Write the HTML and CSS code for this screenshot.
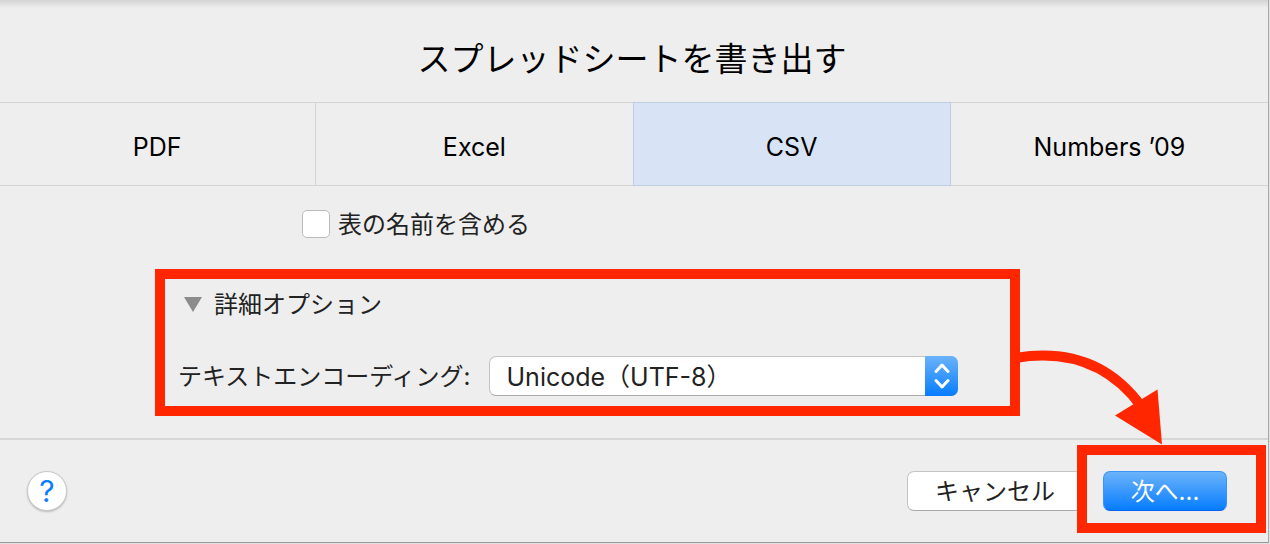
FILE: index.html
```
<!DOCTYPE html>
<html lang="ja">
<head>
    <meta charset="UTF-8">
    <title>スプレッドシートを書き出す</title>
    <link rel="stylesheet" href="styles.css">
</head>
<body>
    <form class="sheet">
        <h1>スプレッドシートを書き出す</h1>

        <div class="tabs" role="tablist">
            <button type="button" role="tab">PDF</button>
            <button type="button" role="tab">Excel</button>
            <button type="button" role="tab" class="active" aria-selected="true">CSV</button>
            <button type="button" role="tab">Numbers ’09</button>
        </div>

        <div class="options">
            <div class="check-row">
                <input type="checkbox" id="tableNames">
                <label for="tableNames">表の名前を含める</label>
            </div>

            <div class="advanced">
                <button type="button" class="disclosure" aria-expanded="true">
                    <svg width="18" height="15" viewBox="0 0 18 15"><path d="M0 0h18L9 15z" fill="#8c8c8c"/></svg>
                    <span>詳細オプション</span>
                </button>
                <div class="encoding-row">
                    <label for="encoding">テキストエンコーディング:</label>
                    <div class="popup">
                        <select id="encoding">
                            <option>Unicode（UTF-8）</option>
                        </select>
                        <span class="stepper">
                            <svg width="16" height="26" viewBox="0 0 16 26" fill="none" stroke="#fff" stroke-width="3" stroke-linecap="round" stroke-linejoin="round"><path d="M2 8.500L8 2l6 6.500M2 17.500L8 24l6-6.500"/></svg>
                        </span>
                    </div>
                </div>
            </div>
        </div>

        <div class="footer">
            <button type="button" class="help" aria-label="ヘルプ">?</button>
            <button type="button" class="cancel">キャンセル</button>
            <div class="next-step">
                <button type="submit" class="next">次へ...</button>
                <svg class="arrow" width="160" height="110" viewBox="1010 340 160 110">
                    <path d="M1015 358C1063 350 1108 361 1141 406" fill="none" stroke="#ff2600" stroke-width="10"/>
                    <path d="M1115 415.500L1157.500 389.500 1162 444.500z" fill="#ff2600"/>
                </svg>
            </div>
        </div>
    </form>
</body>
</html>
```
FILE: styles.css
```
body {
    margin: 0;
    background-color: #e2e2e2;
    font-family: Inter, "Noto Sans CJK JP", sans-serif;
    font-size: 24px;
    color: #222;
}
button, select {
    font: inherit;
    color: inherit;
    margin: 0;
}
.sheet {
    margin-right: 1px;
    border-right: 1px solid #a8a8a8;
    border-bottom: 1px solid #989898;
    background: #eee linear-gradient(#d4d4d4, #eee) no-repeat top / 100% 8px;
}
h1 {
    margin: 0;
    padding: 35px 4px 19px 0;
    font-size: 33px;
    line-height: 48px;
    font-weight: normal;
    text-align: center;
    color: #000;
}
.tabs {
    display: grid;
    grid-template-columns: repeat(4, 1fr);
    margin-left: -1px;
    border-top: 1px solid #d4d4d4;
    border-bottom: 1px solid #d4d4d4;
}
.tabs button {
    height: 82px;
    padding: 6px 0 0;
    border: none;
    border-right: 1px solid #d4d4d4;
    background: none;
    font-size: 25px;
    color: #000;
}
.tabs button:last-child {
    border-right: none;
}
.tabs .active {
    height: 84px;
    margin: -1px 0 -1px -1px;
    border: 1px solid #c0cce0;
    background-color: #d8e3f5;
}
.options {
    padding: 24px 0 22px 155px;
    border-bottom: 2px solid #d6d6d6;
}
.options label, .disclosure span {
    padding-bottom: 4px;
}
.check-row {
    display: flex;
    align-items: center;
    gap: 8px;
    height: 28px;
    padding-left: 147px;
}
input[type="checkbox"] {
    appearance: none;
    box-sizing: border-box;
    width: 28px;
    height: 28px;
    margin: 0;
    border: 1px solid #bbb;
    border-radius: 5px;
    background-color: #fff;
}
.advanced {
    box-sizing: border-box;
    max-width: 865px;
    margin-top: 31px;
    padding: 7px 52px 10px 13px;
    border: 10px solid #ff2600;
}
.disclosure {
    display: flex;
    align-items: center;
    gap: 12px;
    height: 36px;
    padding: 0 6px;
    border: none;
    background: none;
}
.encoding-row {
    display: flex;
    align-items: center;
    gap: 18px;
    margin-top: 34px;
}
.popup {
    position: relative;
    flex: 1;
}
.popup select {
    appearance: none;
    display: block;
    width: 100%;
    height: 40px;
    padding: 2px 40px 0 17px;
    border: 1px solid #c4c4c4;
    border-bottom-color: #aaa;
    border-radius: 7px;
    background-color: #fff;
    font-size: 25px;
}
.stepper {
    position: absolute;
    top: 0;
    right: 0;
    bottom: 0;
    display: flex;
    align-items: center;
    justify-content: center;
    width: 33px;
    border-radius: 0 7px 7px 0;
    background: linear-gradient(#6bb3fa, #077dff);
    pointer-events: none;
}
.footer {
    display: flex;
    align-items: center;
    padding: 31px 41px 31px 27px;
}
.help {
    width: 40px;
    height: 40px;
    margin-right: auto;
    padding: 0;
    border: 1px solid #c8c8c8;
    border-radius: 50%;
    background-color: #fff;
    box-shadow: 0 1px 2px #bbb;
    font-size: 30px;
    line-height: 36px;
    color: #087eff;
}
.cancel {
    width: 176px;
    height: 40px;
    padding: 0 0 4px;
    border: 1px solid #c4c4c4;
    border-bottom-color: #aaa;
    border-radius: 7px;
    background-color: #fff;
}
.next-step {
    position: relative;
    margin-left: 20px;
}
/* red callout frame around the next button */
.next-step::before {
    content: "";
    position: absolute;
    inset: -26px -39px -22px -26px;
    border: 10px solid #ff2600;
    pointer-events: none;
}
.next {
    display: block;
    width: 124px;
    height: 40px;
    padding: 0 0 4px;
    border: 1px solid #3b93f8;
    border-bottom-color: #0863f5;
    border-radius: 7px;
    background: linear-gradient(#6bb3fa, #077dff);
    color: #fff;
}
.arrow {
    position: absolute;
    top: -131px;
    left: -93px;
    pointer-events: none;
}
```
